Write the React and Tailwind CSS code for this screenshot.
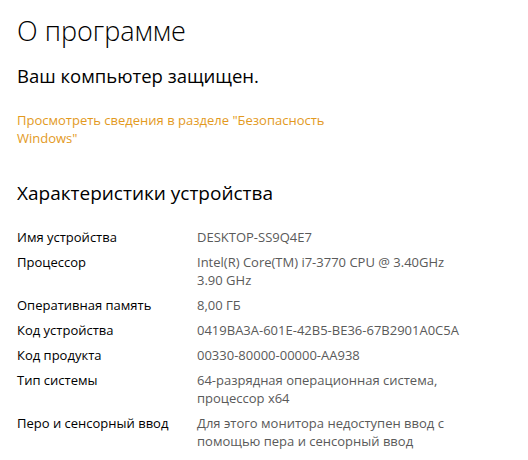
const specs = [
  { label: 'Имя устройства', value: ['DESKTOP-SS9Q4E7'] },
  { label: 'Процессор', value: ['Intel(R) Core(TM) i7-3770 CPU @ 3.40GHz', '3.90 GHz'] },
  { label: 'Оперативная память', value: ['8,00 ГБ'] },
  { label: 'Код устройства', value: ['0419BA3A-601E-42B5-BE36-67B2901A0C5A'] },
  { label: 'Код продукта', value: ['00330-80000-00000-AA938'] },
  { label: 'Тип системы', value: ['64-разрядная операционная система,', 'процессор x64'] },
  { label: 'Перо и сенсорный ввод', value: ['Для этого монитора недоступен ввод с', 'помощью пера и сенсорный ввод'] },
]

export default function App() {
  return (
    <div
      className="w-[528px] h-[460px] bg-white pl-[17px] pt-[12px] overflow-hidden"
      style={{ fontFamily: '"Open Sans", "Noto Sans", sans-serif' }}
    >
      <h1 className="text-[27px] font-light leading-[38px] text-black">О программе</h1>

      <p className="mt-[13px] text-[18.5px] leading-[26px] text-black">Ваш компьютер защищен.</p>

      <a className="mt-[22px] block w-[330px] text-[13px] leading-[18px] text-[#e39a1e]">
        Просмотреть сведения в разделе "Безопасность Windows"
      </a>

      <h2 className="mt-[33px] text-[19px] leading-[26px] text-black">Характеристики устройства</h2>

      <div className="mt-[22px] flex flex-col gap-[7px] text-[13px] leading-[18px]">
        {specs.map((row) => (
          <div key={row.label} className="flex">
            <div className="w-[180px] shrink-0 text-black">{row.label}</div>
            <div className="text-[#5a5a5a]">
              {row.value.map((line) => (
                <div key={line}>{line}</div>
              ))}
            </div>
          </div>
        ))}
      </div>
    </div>
  )
}
